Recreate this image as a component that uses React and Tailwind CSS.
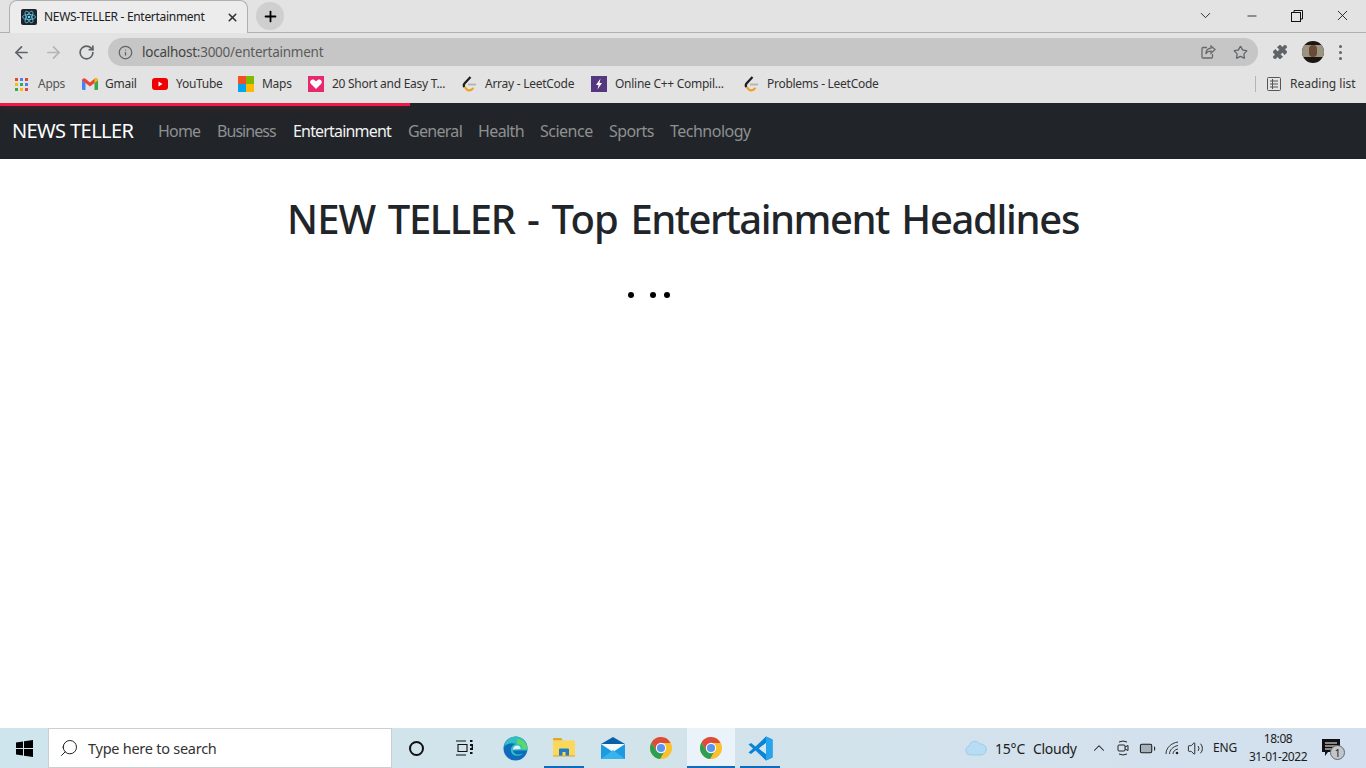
import { ArrowLeft, ArrowRight, RotateCw, Info, Star, Puzzle, ChevronDown, ChevronUp, Minus, X, Plus, Search, Battery, Volume2 } from 'lucide-react';

const ui = 'font-["Noto_Sans","Open_Sans",sans-serif]';

const navLinks = [
  { label: 'Home', w: 'w-[43px]', track: 'tracking-[-0.8px]' },
  { label: 'Business', w: 'w-[60px]', track: 'tracking-[-0.95px]' },
  { label: 'Entertainment', w: 'w-[99px]', track: 'tracking-[-0.82px]', active: true },
  { label: 'General', w: 'w-[54px]', track: 'tracking-[-0.7px]' },
  { label: 'Health', w: 'w-[46px]', track: 'tracking-[-0.6px]' },
  { label: 'Science', w: 'w-[53px]', track: 'tracking-[-0.5px]' },
  { label: 'Sports', w: 'w-[45px]', track: 'tracking-[-0.6px]' },
  { label: 'Technology', w: 'w-[81px]', track: 'tracking-[-0.5px]' },
];

function AppsIcon() {
  const colors = ['#ea4335', '#4285f4', '#ea4335', '#fbbc05', '#34a853', '#4285f4', '#34a853', '#fbbc05', '#ea4335'];
  return (
    <div className="grid grid-cols-3 gap-[2px] w-[13px] h-[13px]">
      {colors.map((c, i) => <span key={i} className="w-[3px] h-[3px]" style={{ background: c }} />)}
    </div>
  );
}

function GmailIcon() {
  return (
    <svg width="16" height="12" viewBox="0 0 16 12">
      <path d="M0 2v9a1 1 0 0 0 1 1h2.500V5z" fill="#4285f4" />
      <path d="M16 2v9a1 1 0 0 1-1 1h-2.500V5z" fill="#34a853" />
      <path d="M0 2.500 C0 .5 2 -.5 3.500 .7 L8 4.500 L12.500 .7 C14 -.5 16 .5 16 2.500 L12.500 5 L8 8.500 L3.500 5z" fill="#ea4335" />
      <path d="M12.500 .7 C14 -.5 16 .5 16 2.500 L12.500 5z" fill="#fbbc05" />
    </svg>
  );
}

function YoutubeIcon() {
  return (
    <svg width="16" height="12" viewBox="0 0 16 12">
      <rect width="16" height="12" rx="3" fill="#f00000" />
      <path d="M6.500 3.500v5l4-2.500z" fill="#fff" />
    </svg>
  );
}

function MapsIcon() {
  return (
    <div className="grid grid-cols-2 w-[16px] h-[16px]">
      <span className="bg-[#f25022]" />
      <span className="bg-[#7fba00]" />
      <span className="bg-[#00a4ef]" />
      <span className="bg-[#ffb900]" />
    </div>
  );
}

function HeartIcon() {
  return (
    <svg width="16" height="16" viewBox="0 0 16 16">
      <rect width="16" height="16" fill="#e6286f" />
      <path d="M8 13 L2.800 7.800 C1 5.500 3.500 2.500 6 3.800 L8 5.300 L10 3.800 C12.500 2.500 15 5.500 13.200 7.800z" fill="#fff" />
    </svg>
  );
}

function LeetIcon() {
  return (
    <svg width="15" height="17" viewBox="0 0 15 17" fill="none">
      <path d="M8.500 1 L2.500 7.500 Q1 9.500 2.500 11" stroke="#1c1c1c" strokeWidth="2.200" />
      <path d="M2.800 11 Q5.500 15.500 9 14 L11.500 12" stroke="#f0a020" strokeWidth="2.200" />
      <path d="M6 8.500h8" stroke="#b3b3b3" strokeWidth="1.800" />
    </svg>
  );
}

function BoltIcon() {
  return (
    <svg width="16" height="16" viewBox="0 0 16 16">
      <rect width="16" height="16" fill="#54387f" />
      <path d="M9.500 2.500 L5 9h2.500 L6.500 13.500 L11 7H8.500z" fill="#fff" />
    </svg>
  );
}

function ReactIcon() {
  return (
    <svg width="16" height="16" viewBox="0 0 16 16" fill="none">
      <rect width="16" height="16" rx="2" fill="#20232a" />
      <g stroke="#61dafb" strokeWidth=".7">
        <ellipse cx="8" cy="8" rx="6.500" ry="2.600" />
        <ellipse cx="8" cy="8" rx="6.500" ry="2.600" transform="rotate(60 8 8)" />
        <ellipse cx="8" cy="8" rx="6.500" ry="2.600" transform="rotate(120 8 8)" />
      </g>
      <circle cx="8" cy="8" r="1.300" fill="#61dafb" />
    </svg>
  );
}

function ChromeIcon() {
  return (
    <svg width="24" height="24" viewBox="0 0 24 24">
      <circle cx="12" cy="12" r="11" fill="#fbc02d" />
      <path d="M12 1a11 11 0 0 0-9.500 5.500L7.500 15 12 7h9.500A11 11 0 0 0 12 1z" fill="#dd4b3e" />
      <path d="M2.500 6.500A11 11 0 0 0 11 23l4.800-8.300-8.300.3z" fill="#2c9f52" />
      <circle cx="12" cy="12" r="5.200" fill="#fff" />
      <circle cx="12" cy="12" r="4.100" fill="#5a95f0" />
    </svg>
  );
}

function EdgeIcon() {
  return (
    <svg width="25" height="25" viewBox="0 0 25 25">
      <circle cx="12.500" cy="12.500" r="12" fill="#0f6cbd" />
      <path d="M1 11C2 4.500 7 .5 12.500 .5 C19 .5 24.500 5.500 24.500 13 L24.500 14.500 L10 14.500 C10.500 18 14 19.500 20 17.500 C17 21 9 21 8 15 C7.500 11 10 8.500 13 8 C8 6.500 3 7.500 1 11z" fill="#2fc0c5" />
      <path d="M14 8 C19 8 20 11.500 19 13 L24.500 13 C24 8 20 3 14 3 z" fill="#5fd85f" />
      <path d="M10 13.500 C10 10.500 12.500 9 15 9.500 C17 10 18 11.500 17.500 13 z" fill="#e0f1f6" />
    </svg>
  );
}

function FolderIcon() {
  return (
    <svg width="22" height="20" viewBox="0 0 22 20">
      <path d="M0 1a1 1 0 0 1 1-1h7l2 2.500H0z" fill="#e5a422" />
      <rect x="0" y="2.500" width="22" height="15.500" fill="#fbd75b" />
      <path d="M6 18V11.500a1 1 0 0 1 1-1h8a1 1 0 0 1 1 1V18h-3.500v-4h-3v4z" fill="#1f7fc4" />
      <rect x="0" y="17.500" width="22" height="1" fill="#e5a422" />
    </svg>
  );
}

function MailIcon() {
  return (
    <svg width="24" height="22" viewBox="0 0 24 22">
      <path d="M0 7 L12 0 L24 7z" fill="#0b5fa8" />
      <rect y="7" width="24" height="15" fill="#1d9bdf" />
      <path d="M0 7h24L12 15z" fill="#f4f9fc" />
      <path d="M0 22 L12 13 L24 22z" fill="#38b3ee" />
    </svg>
  );
}

function VsCodeIcon() {
  return (
    <svg width="25" height="25" viewBox="0 0 25 25">
      <path d="M18 .5 L24.500 3.500v18 L18 24.500 L7.500 14.500 L3 18 L.5 16.500 L5 12.500 L.5 8.500 L3 7 L7.500 10.500z M18 7 L11 12.500 L18 18z" fill="#0a84d6" fillRule="evenodd" />
      <path d="M18 .5 L24.500 3.500v18 L18 24.500z M18 7v11" fill="#27a4ee" />
      <path d="M18 7 L11 12.500 L18 18z" fill="#d6e6f0" />
    </svg>
  );
}

function ChromeBar() {
  return (
    <header className={`${ui} shrink-0 bg-[#e3e3e3] text-[#202124]`}>
      {/* tab strip */}
      <div className="h-[33px] flex items-end border-b border-[#b0b0b0]">
        <div className="ml-[9px] w-[239px] h-[33px] flex items-center pl-[11px] pr-[8px] bg-[#ececec] rounded-t-lg border border-b-0 border-[#b0b0b0] -mb-px">
          <ReactIcon />
          <span className="ml-[7px] text-[12px] tracking-[-0.3px] whitespace-nowrap flex-1">NEWS-TELLER - Entertainment</span>
          <X size={13} strokeWidth={3} className="text-[#333]" />
        </div>
        <div className="ml-[8px] mb-[2px] w-7 h-7 rounded-full bg-[#cfcfcf] flex items-center justify-center">
          <Plus size={17} strokeWidth={2.500} className="text-black" />
        </div>
        <div className="flex-1" />
        <div className="flex items-center h-[33px] text-[#111]">
          <ChevronDown size={17} strokeWidth={1.200} className="mr-[31px]" />
          <Minus size={14} strokeWidth={1.400} className="mr-[32px]" />
          <svg width="12" height="12" viewBox="0 0 12 12" fill="none" stroke="#111" className="mr-[31px]">
            <rect x=".5" y="2.500" width="9" height="9" />
            <path d="M3 2.500V.5h8.500V9H9.500" />
          </svg>
          <X size={17} strokeWidth={1.200} className="mr-[15px]" />
        </div>
      </div>

      {/* address row */}
      <div className="h-[34px] pt-[4px] flex items-center">
        <ArrowLeft size={19} strokeWidth={2.200} className="ml-[12px] text-[#5f6368]" />
        <ArrowRight size={19} strokeWidth={2.200} className="ml-[13px] text-[#b4b5b6]" />
        <RotateCw size={17} strokeWidth={2.400} className="ml-[15px] text-[#5f6368]" />
        <div className="ml-[13px] w-[1150px] h-[28px] bg-[#c6c6c6] rounded-full flex items-center pl-[10px] pr-[10px]">
          <Info size={15} strokeWidth={2} className="text-[#5f6368]" />
          <span className="ml-[9px] text-[13.500px] tracking-[-0.25px] text-[#5b5b5b]">
            <span className="text-[#444]">localhost</span>:3000/entertainment
          </span>
          <div className="flex-1" />
          <svg width="15" height="14" viewBox="0 0 15 14" fill="none" stroke="#6a6a6a" strokeWidth="1.300">
            <path d="M6 2.500H2a1 1 0 0 0-1 1V12a1 1 0 0 0 1 1h8.500a1 1 0 0 0 1-1V9" />
            <path d="M14 4.500 10 1v2.200C6.500 3.500 5 6 4.800 9c1.200-2 3-2.900 5.200-2.800V8.200z" />
          </svg>
          <Star size={15} strokeWidth={2} className="ml-[17px] text-[#5f6368]" />
        </div>
        <Puzzle size={16} fill="#5f6368" strokeWidth={1} className="ml-[14px] text-[#5f6368]" />
        <div className="ml-[14px] w-[22px] h-[22px] rounded-full bg-[#1c1512] overflow-hidden flex items-start justify-center">
          <div className="mt-[4px] w-[22px] h-[12px] bg-[#9a9480] flex justify-center">
            <span className="w-[8px] h-[12px] rounded-full bg-[#6b4a38]" />
          </div>
        </div>
        <div className="ml-[15px] flex flex-col gap-[3px]">
          <span className="w-[3px] h-[3px] rounded-full bg-[#5f6368]" />
          <span className="w-[3px] h-[3px] rounded-full bg-[#5f6368]" />
          <span className="w-[3px] h-[3px] rounded-full bg-[#5f6368]" />
        </div>
      </div>

      {/* bookmarks row */}
      <div className="h-[36px] pb-[2px] flex items-center text-[12px] tracking-[-0.27px] text-[#333]">
        <div className="ml-[15px] w-[23px]"><AppsIcon /></div>
        <span className="w-[44px] text-[#555]">Apps</span>
        <div className="w-[23px]"><GmailIcon /></div>
        <span className="w-[47px]">Gmail</span>
        <div className="w-[24px]"><YoutubeIcon /></div>
        <span className="w-[62px]">YouTube</span>
        <div className="w-[24px]"><MapsIcon /></div>
        <span className="w-[46px]">Maps</span>
        <div className="w-[24px]"><HeartIcon /></div>
        <span className="w-[130px] whitespace-nowrap">20 Short and Easy T...</span>
        <div className="w-[23px]"><LeetIcon /></div>
        <span className="w-[106px] whitespace-nowrap">Array - LeetCode</span>
        <div className="w-[24px]"><BoltIcon /></div>
        <span className="w-[129px] whitespace-nowrap">Online C++ Compil...</span>
        <div className="w-[23px]"><LeetIcon /></div>
        <span className="w-[120px] whitespace-nowrap">Problems - LeetCode</span>
        <div className="flex-1" />
        <div className="w-px h-[16px] bg-[#b5b5b5]" />
        <svg width="14" height="14" viewBox="0 0 14 14" fill="none" stroke="#555" className="ml-[11px]">
          <rect x=".5" y=".5" width="13" height="13" rx="1" />
          <path d="M3 4h8M3 7h8M3 10h8M5.500 2v10" />
        </svg>
        <span className="ml-[9px] w-[76px] whitespace-nowrap tracking-normal">Reading list</span>
      </div>
    </header>
  );
}

function Navbar() {
  return (
    <nav className={`${ui} relative overflow-hidden shrink-0 h-[56px] bg-[#212529] flex items-center pl-[12px]`}>
      <div className="absolute left-0 top-0 h-[3px] w-[410px] bg-[#f11946] shadow-[0_0_8px_#f1194660]" />
      <a className="text-[20px] tracking-[-0.6px] text-white w-[146px] whitespace-nowrap">NEWS TELLER</a>
      <div className="flex items-center gap-4 text-[16px]">
        {navLinks.map((link) => (
          <a key={link.label} className={`${link.w} ${link.track} whitespace-nowrap ${link.active ? 'text-[#f2f2f2]' : 'text-[#8e9091]'}`}>
            {link.label}
          </a>
        ))}
      </div>
    </nav>
  );
}

function Content() {
  return (
    <main className={`${ui} flex-1 bg-white flex flex-col items-center`}>
      <h1 className="mt-[33px] h-[54px] text-[40px] leading-[54px] font-medium tracking-[-0.88px] [word-spacing:3px] text-[#212529] whitespace-nowrap">
        NEW <span className="tracking-[-1.38px]">TELLER</span> - Top <span className="tracking-[-1.5px]">Entertainment</span> <span className="tracking-[-1.33px]">Headlines</span>
      </h1>
      <div className="mt-[46px] ml-[-68px] flex items-center">
        <span className="w-[6px] h-[6px] rounded-full bg-black" />
        <span className="ml-[16px] w-[6px] h-[6px] rounded-full bg-black" />
        <span className="ml-[8px] w-[6px] h-[6px] rounded-full bg-black" />
      </div>
    </main>
  );
}

function TaskIcon({ children, active, lit, className }) {
  return (
    <div className={`relative h-[40px] flex items-center justify-center ${lit ? 'bg-[#eaf3f9]' : ''} ${className}`}>
      {children}
      {active && <span className={`absolute bottom-0 h-[2px] bg-[#0f6cbd] ${lit ? 'left-0 right-0' : 'left-[2px] right-[2px]'}`} />}
    </div>
  );
}

function Taskbar() {
  return (
    <footer className={`${ui} shrink-0 h-[40px] flex items-center bg-gradient-to-r from-[#cfe5ee] via-[#d2e3ea] to-[#d3e0ef] text-[#1c1c1c]`}>
      <div className="w-[48px] flex justify-center">
        <svg width="17" height="17" viewBox="0 0 17 17" fill="#000">
          <path d="M0 2.400 7 1.400V8H0zM8 1.200 17 0v8H8zM0 9h7v6.600L0 14.600zM8 9h9v8l-9-1.200z" />
        </svg>
      </div>
      <div className="w-[344px] h-[40px] bg-white border border-[#c9ced1] flex items-center pl-[10px]">
        <Search size={20} strokeWidth={1.200} className="-scale-x-100 text-[#222]" />
        <span className="ml-[9px] pt-[1px] text-[14.500px] tracking-[-0.26px] text-[#333]">Type here to search</span>
      </div>
      <div className="w-[50px] flex justify-center ml-[-1px]">
        <span className="w-[15px] h-[15px] rounded-full border-[2.500px] border-[#111]" />
      </div>
      <div className="w-[46px] flex justify-center">
        <svg width="17" height="16" viewBox="0 0 17 16" fill="none" stroke="#111" strokeWidth="1.100">
          <path d="M0 1h10M2 4.500h9v7H2zM0 15h10" />
          <path d="M14 1h2.500M14 5h2.500v4H14M14 13h2.500" strokeWidth="1.800" />
        </svg>
      </div>
      <TaskIcon className="w-[52px] ml-[2px]"><EdgeIcon /></TaskIcon>
      <TaskIcon active className="w-[44px] ml-[1px]"><FolderIcon /></TaskIcon>
      <TaskIcon className="w-[54px]"><MailIcon /></TaskIcon>
      <TaskIcon className="w-[42px]"><ChromeIcon /></TaskIcon>
      <TaskIcon active lit className="w-[48px] ml-[5px]"><ChromeIcon /></TaskIcon>
      <TaskIcon active className="w-[44px] ml-[3px]"><VsCodeIcon /></TaskIcon>
      <div className="flex-1" />
      <svg width="22" height="16" viewBox="0 0 22 16" className="mr-[8px]">
        <path d="M5 15a4.500 4.500 0 0 1-1-8.800A6 6 0 0 1 15 4a5.500 5.500 0 0 1 1.500 11z" fill="#b8dcf3" stroke="#88bfe6" strokeWidth=".6" />
      </svg>
      <span className="w-[38px] text-[14px] tracking-[-0.2px] whitespace-nowrap">15°C</span>
      <span className="w-[57px] text-[14px] tracking-[-0.3px] whitespace-nowrap">Cloudy</span>
      <ChevronUp size={18} strokeWidth={1.400} className="mr-[9px]" />
      <svg width="12" height="18" viewBox="0 0 12 18" fill="none" stroke="#222" strokeWidth="1" className="mr-[10px]">
        <path d="M2 3q4-2 8 0M2 15q4 2 8 0" />
        <rect x="1" y="6" width="7" height="6" rx="1" />
        <path d="M8 8l3-1.500v5L8 10" />
      </svg>
      <Battery size={17} strokeWidth={1.500} fill="#222" fillOpacity={0.250} className="mr-[9px]" />
      <svg width="15" height="14" viewBox="0 0 15 14" fill="none" stroke="#333" strokeWidth="1" className="mr-[7px]">
        <path d="M1 13C1 7 6 2 13 1M4.500 13C4.500 9 8 5.500 13 4.500M8 13c0-2.500 2-4.500 5-5" />
        <circle cx="12" cy="12" r="1.300" fill="#222" stroke="none" />
      </svg>
      <Volume2 size={17} strokeWidth={1.300} className="mr-[9px]" />
      <span className="w-[29px] text-[12px] tracking-[-0.2px] whitespace-nowrap">ENG</span>
      <div className="w-[72px] flex flex-col items-center text-[12px] leading-[18px] tracking-[-0.45px] whitespace-nowrap">
        <span>18:08</span>
        <span>31-01-2022</span>
      </div>
      <div className="relative w-[24px] h-[24px] ml-[7px] mr-[21px]">
        <svg width="18" height="17" viewBox="0 0 18 17" className="absolute left-[1px] top-[3px]">
          <path d="M0 0h18v13H6l-3 4v-4H0z" fill="#111" />
          <path d="M3 4h12M3 7h12M3 10h8" stroke="#fff" strokeWidth="1" />
        </svg>
        <span className="absolute left-[9px] top-[9px] w-[15px] h-[15px] rounded-full bg-[#c0c6ca] border border-[#666] flex items-center justify-center text-[10px] leading-none text-[#111]">1</span>
      </div>
    </footer>
  );
}

export default function App() {
  return (
    <div className="h-[768px] w-[1366px] overflow-hidden flex flex-col bg-white">
      <ChromeBar />
      <Navbar />
      <Content />
      <Taskbar />
    </div>
  );
}
